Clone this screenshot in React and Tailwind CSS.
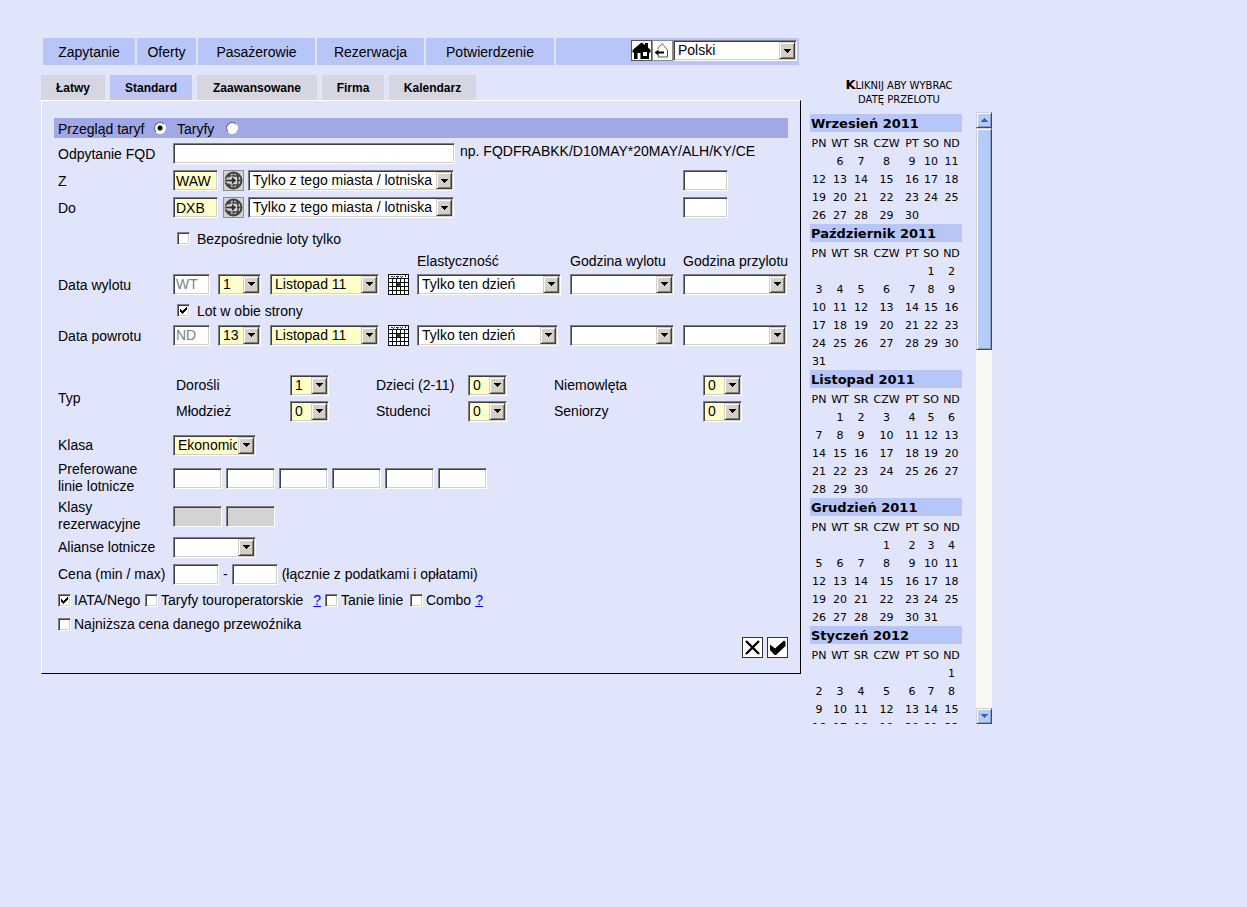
import { useRef } from "react";
import clsx from "clsx";

const SUNKEN =
  "border border-t-[#808080] border-l-[#808080] border-b-white border-r-white shadow-[inset_1px_1px_0_#404040,inset_-1px_-1px_0_#d4d0c8] rounded-none outline-none";

function Select({ label, id, options, className, yellow }) {
  return (
    <span className={clsx("relative inline-block h-[21px] shrink-0", className)}>
      <select
        id={id}
        aria-label={label}
        className={clsx(
          SUNKEN,
          "block h-full w-full appearance-none overflow-hidden pr-[18px] pl-1 text-sm leading-[19px] text-black",
          yellow ? "bg-[#ffffcc]" : "bg-white"
        )}
      >
        {options.map((o) => (
          <option key={o}>{o}</option>
        ))}
      </select>
      <span className="pointer-events-none absolute top-0.5 right-0.5 bottom-0.5 flex w-4 items-center justify-center border border-t-[#d4d0c8] border-r-[#404040] border-b-[#404040] border-l-[#d4d0c8] bg-[#d4d0c8] shadow-[inset_1px_1px_0_#ffffff,inset_-1px_-1px_0_#808080]">
        <svg width="7" height="4" viewBox="0 0 7 4" shapeRendering="crispEdges" aria-hidden="true">
          <path d="M0 0h7v1H6v1H5v1H4v1H3V3H2V2H1V1H0z" fill="#000" />
        </svg>
      </span>
    </span>
  );
}

function TextBox({ label, id, value, disabled, className, tone = "bg-white" }) {
  return (
    <input
      type="text"
      id={id}
      aria-label={label}
      defaultValue={value}
      disabled={disabled}
      className={clsx(SUNKEN, "h-[21px] shrink-0 px-0.5 text-sm leading-[19px] disabled:text-[#808080]", tone, className)}
    />
  );
}

function Check({ id, checked }) {
  return (
    <span className="relative inline-block size-[13px] shrink-0">
      <input
        type="checkbox"
        id={id}
        defaultChecked={checked}
        className={clsx(SUNKEN, "peer block size-[13px] appearance-none bg-white")}
      />
      <svg
        className="pointer-events-none absolute inset-0 hidden peer-checked:block"
        width="13"
        height="13"
        viewBox="0 0 13 13"
        shapeRendering="crispEdges"
        aria-hidden="true"
      >
        <path d="M3 5h1v1h1v1h1V6h1V5h1V4h1V3h1v3H9v1H8v1H7v1H6v1H5V9H4V8H3z" fill="#000" />
      </svg>
    </span>
  );
}

function Radio({ id, checked }) {
  return (
    <input
      type="radio"
      name="mode"
      id={id}
      defaultChecked={checked}
      className="size-3 appearance-none rounded-full border border-t-[#606060] border-r-white border-b-white border-l-[#606060] bg-white checked:bg-[radial-gradient(circle,#000_2px,#fff_3px)]"
    />
  );
}

function Globe() {
  return (
    <svg width="21" height="21" viewBox="0 0 21 21" aria-hidden="true">
      <rect x="0.5" y="0.5" width="20" height="20" fill="#d2d2d2" stroke="#8f8f8f" />
      <g fill="none" stroke="#404040" strokeWidth="1.400">
        <circle cx="10.5" cy="10.5" r="8" strokeWidth="2" />
        <path d="M10.500 2.500v4M10.500 14.500v4M4.500 6h12M4.500 15h12M14 10.500h4.500" />
        <path d="M8 3C6.500 4.500 5.800 6 5.500 7.500M5.500 13.500c.3 1.500 1 3 2.500 4.500M13 3c3 3.500 3 11.500 0 15" />
      </g>
      <path d="M2 9.200h6.500V6l5 4.500-5 4.500v-3.200H2z" fill="#303030" stroke="#d2d2d2" strokeWidth="0.8" />
    </svg>
  );
}

function GridCalendar() {
  return (
    <svg width="21" height="21" viewBox="0 0 21 21" shapeRendering="crispEdges" aria-hidden="true">
      <path fill="#fff" d="M0 0h21v21H0z" />
      <path
        fill="none"
        stroke="#111"
        d="M.5.5h20v20H.5zM1 4.500h19M1 8.500h19M1 12.500h19M1 16.500h19M4.500 5v15M8.500 5v15M12.500 5v15M16.500 5v15"
      />
      <path fill="#333" d="M3 2h2v1H3zM6 2h1v1H6zM8 2h3v1H8zM12 2h1v1h-1zM14 2h1v1h-1zM17 1h1v2h-1zM5 3h1v1H5zM9 3h1v1H9zM13 3h1v1h-1z" />
      <path fill="#111" d="M9 8h1v1h2V8h1v2h-1v1h1v2h-1v-1h-2v1H9v-2h1v-1H9z" />
      <path fill="#333" d="M9 9h4v3H9z" />
    </svg>
  );
}

function Home() {
  return (
    <svg width="21" height="21" viewBox="0 0 21 21" aria-hidden="true">
      <rect x="0.5" y="0.5" width="20" height="20" fill="#fff" stroke="#555" />
      <path
        fill="#000"
        fillRule="evenodd"
        d="M10.500 2.500L14 5V3h3v4.500L19.500 10v2.500H18V19H9.500v-6H6.500v6H3v-6.500H1.500V10zM12 12v4h4v-4z"
      />
    </svg>
  );
}

function Back() {
  return (
    <svg width="21" height="21" viewBox="0 0 21 21" aria-hidden="true">
      <rect x="0.5" y="0.5" width="20" height="20" fill="#fff" stroke="#8c8c8c" />
      <path d="M5.500 9L10 3.500l5.500 6.500" fill="none" stroke="#666" />
      <path d="M15.500 10v7h-9v-2" fill="none" stroke="#555" />
      <path d="M2.500 12.500l4-3v2h5.500v2H6.500v2z" fill="#000" />
    </svg>
  );
}

const MONTHS = [
  { name: "Wrzesień 2011", first: 1, from: 6, to: 30 },
  { name: "Październik 2011", first: 5, from: 1, to: 31 },
  { name: "Listopad 2011", first: 1, from: 1, to: 30 },
  { name: "Grudzień 2011", first: 3, from: 1, to: 31 },
  { name: "Styczeń 2012", first: 6, from: 1, to: 31 },
];
const DAYS = ["PN", "WT", "SR", "CZW", "PT", "SO", "ND"];

function weeksOf({ first, from, to }) {
  const cells = Array(first).fill(null);
  for (let d = from; d <= to; d++) cells.push(d);
  while (cells.length % 7) cells.push(null);
  const weeks = [];
  for (let i = 0; i < cells.length; i += 7) weeks.push(cells.slice(i, i + 7));
  return weeks;
}

function Month({ month }) {
  return (
    <table className="w-[152px] table-fixed border-collapse text-center text-[11px] leading-4">
      <caption className="h-[18px] bg-[#b7c5f7] pt-0.5 pl-px text-left text-[13px] leading-4 font-bold">{month.name}</caption>
      <colgroup>
        <col className="w-[18px]" />
        <col className="w-[24px]" />
        <col className="w-[18px]" />
        <col className="w-[33px]" />
        <col className="w-[18px]" />
        <col className="w-[20px]" />
        <col className="w-[21px]" />
      </colgroup>
      <thead>
        <tr className="h-5">
          {DAYS.map((d) => (
            <th key={d} className="p-0 align-bottom font-normal">{d}</th>
          ))}
        </tr>
      </thead>
      <tbody>
        {weeksOf(month).map((week, i) => (
          <tr key={i} className="h-[18px]">
            {week.map((d, j) => (
              <td key={j} className="p-0 pt-0.5">
                {d && <a href="#wylot">{d}</a>}
              </td>
            ))}
          </tr>
        ))}
      </tbody>
    </table>
  );
}

const RAISED =
  "border border-t-[#d4d0c8] border-l-[#d4d0c8] border-r-[#404a5c] border-b-[#404a5c] bg-[#b3ccfa] shadow-[inset_1px_1px_0_#ffffff,inset_-1px_-1px_0_#8aa0c8]";

function Sidebar() {
  const list = useRef(null);
  const scroll = (dy) => list.current.scrollBy({ top: dy });
  return (
    <aside className="w-[182px] shrink-0 pt-10 font-['DejaVu_Sans',sans-serif]">
      <p className="pr-1 text-center text-[10px] leading-[14px] uppercase">
        <b className="text-[13px] leading-[14px]">K</b>liknij aby wybrac
        <br />
        datę przelotu
      </p>
      <div className="mt-[5px] flex h-[612px] justify-between">
        <div ref={list} className="overflow-y-scroll pt-0.5 [scrollbar-width:none]">
          {MONTHS.map((m) => (
            <Month key={m.name} month={m} />
          ))}
        </div>
        <div className="flex w-4 flex-col bg-[#f8f8f4]">
          <button type="button" aria-label="W górę" onClick={() => scroll(-54)} className={clsx(RAISED, "flex h-4 shrink-0 items-center justify-center")}>
            <svg width="7" height="4" viewBox="0 0 7 4" shapeRendering="crispEdges" aria-hidden="true">
              <path d="M3 0h1v1h1v1h1v1h1v1H0V3h1V2h1V1h1z" fill="#46618f" />
            </svg>
          </button>
          <div className={clsx(RAISED, "h-[222px]")} />
          <button type="button" aria-label="W dół" onClick={() => scroll(54)} className={clsx(RAISED, "mt-auto flex h-4 shrink-0 items-center justify-center")}>
            <svg width="7" height="4" viewBox="0 0 7 4" shapeRendering="crispEdges" aria-hidden="true">
              <path d="M0 0h7v1H6v1H5v1H4v1H3V3H2V2H1V1H0z" fill="#46618f" />
            </svg>
          </button>
        </div>
      </div>
    </aside>
  );
}

const NAV = [
  ["Zapytanie", "w-[92px]"],
  ["Oferty", "w-[59px]"],
  ["Pasażerowie", "w-[117px]"],
  ["Rezerwacja", "w-[107px]"],
  ["Potwierdzenie", "w-[128px]"],
];
const TABS = [
  ["Łatwy", "w-[64px]"],
  ["Standard", "w-[82px]"],
  ["Zaawansowane", "w-[120px]"],
  ["Firma", "w-[62px]"],
  ["Kalendarz", "w-[87px]"],
];

function Row({ label, htmlFor, className, children }) {
  return (
    <div className={clsx("grid grid-cols-[115px_1fr] items-center", className)}>
      {htmlFor ? <label htmlFor={htmlFor}>{label}</label> : <span>{label}</span>}
      {children}
    </div>
  );
}

const DATE_GRID = "grid grid-cols-[45px_52px_118px_29px_153px_113px_1fr] items-center";

function DateRow({ id, label, className, weekday, day, flexWidth }) {
  return (
    <Row label={label} htmlFor={id} className={clsx("[&>label]:pt-0.5", className)}>
      <div className={DATE_GRID}>
        <TextBox label="Dzień tygodnia" value={weekday} disabled className="w-[37px]" />
        <Select id={id} options={[day]} className="w-[43px]" yellow />
        <Select label="Miesiąc" options={["Listopad 11", "Grudzień 11"]} className="w-[109px]" yellow />
        <button type="button" aria-label="Kalendarz" className="size-[21px]">
          <GridCalendar />
        </button>
        <Select label="Elastyczność" options={["Tylko ten dzień"]} className={flexWidth} />
        <Select label="Godzina wylotu" options={[""]} className="w-[104px]" />
        <Select label="Godzina przylotu" options={[""]} className="w-[104px]" />
      </div>
    </Row>
  );
}

function AirportRow({ id, label, code }) {
  return (
    <Row label={label} htmlFor={id} className="h-[27px] [&>label]:pt-0.5">
      <div className="grid grid-cols-[50px_25px_435px_1fr] items-center">
        <TextBox id={id} value={code} tone="bg-[#ffffcc]" className="w-[45px]" />
        <button type="button" aria-label="Wybierz lotnisko" className="size-[21px]">
          <Globe />
        </button>
        <Select label="Zakres" options={["Tylko z tego miasta / lotniska"]} className="w-[206px]" />
        <TextBox label="Kod" className="w-[45px]" />
      </div>
    </Row>
  );
}

function Passenger({ id, label, value }) {
  return (
    <>
      <label htmlFor={id}>{label}</label>
      <Select id={id} options={[value]} className="w-[39px]" yellow />
    </>
  );
}

function Option({ id, label, checked, help }) {
  return (
    <span className="flex items-center">
      <Check id={id} checked={checked} />
      <label htmlFor={id} className="pl-[3px]">{label}</label>
      {help && <a href="#pomoc" className="mr-1 ml-auto text-[#0000ff] underline">?</a>}
    </span>
  );
}

export default function App() {
  return (
    <div className="min-h-screen bg-[#e1e5fc] pt-[38px] pl-[41px] font-['Liberation_Sans',Arial,sans-serif] text-sm leading-[17px] text-black">
      <div className="flex items-start gap-[9px]">
        <main className="max-w-[760px] min-w-0 flex-1">
          <nav className="mx-0.5 flex h-[27px] gap-0.5">
            {NAV.map(([text, width]) => (
              <a key={text} href="#menu" className={clsx("flex items-center justify-center bg-[#b7c5f7] pt-0.5", width)}>
                {text}
              </a>
            ))}
            <div className="flex flex-1 items-center justify-end bg-[#b7c5f7] pr-0.5 pb-0.5">
              <button type="button" aria-label="Start"><Home /></button>
              <button type="button" aria-label="Wstecz"><Back /></button>
              <Select label="Język" options={["Polski", "English"]} className="w-[124px]" />
            </div>
          </nav>

          <div className="mt-2.5 flex h-[25px] gap-[5px] text-xs font-bold">
            {TABS.map(([text, width]) => (
              <button key={text} type="button" className={clsx(width, text === "Standard" ? "bg-[#bdc5f7]" : "bg-[#d6d6e2]")}>
                {text}
              </button>
            ))}
          </div>

          <form className="border border-t-white border-r-black border-b-black border-l-white px-3 pt-[17px] pb-[15px]" onSubmit={(e) => e.preventDefault()}>
            <div className="flex h-5 items-center bg-[#a0a8e6] pl-1">
              <label htmlFor="review" className="w-24 pt-0.5">Przegląd taryf</label>
              <Radio id="review" checked />
              <label htmlFor="fares" className="w-[60px] pt-0.5 pl-[11px]">Taryfy</label>
              <Radio id="fares" />
            </div>

            <div className="pt-0.5 pl-1">
              <Row label="Odpytanie FQD" htmlFor="fqd" className="h-[27px] [&>label]:pt-0.5">
                <div className="flex items-start gap-[5px]">
                  <TextBox id="fqd" className="w-[282px]" />
                  <span>np. FQDFRABKK/D10MAY*20MAY/ALH/KY/CE</span>
                </div>
              </Row>
              <AirportRow id="from" label="Z" code="WAW" />
              <AirportRow id="to" label="Do" code="DXB" />

              <div className="flex h-[30px] items-center gap-[7px] pt-1 pl-[119px]">
                <Check id="direct" />
                <label htmlFor="direct" className="pt-0.5">Bezpośrednie loty tylko</label>
              </div>

              <div className={clsx(DATE_GRID, "h-5 pl-[115px] whitespace-nowrap")}>
                <span className="col-start-5">Elastyczność</span>
                <span>Godzina wylotu</span>
                <span>Godzina przylotu</span>
              </div>
              <DateRow id="out" label="Data wylotu" className="h-[26px]" weekday="WT" day="1" flexWidth="w-[144px]" />
              <div className="flex h-[26px] items-center gap-[7px] pl-[119px]">
                <Check id="return" checked />
                <label htmlFor="return" className="pt-0.5">Lot w obie strony</label>
              </div>
              <DateRow id="back" label="Data powrotu" className="h-6" weekday="ND" day="13" flexWidth="w-[141px]" />

              <Row label="Typ" className="mt-[25px] h-[52px]">
                <div className="grid grid-cols-[114px_86px_92px_86px_149px_1fr] grid-rows-[26px_26px] items-center pl-[3px]">
                  <Passenger id="adults" label="Dorośli" value="1" />
                  <Passenger id="children" label="Dzieci (2-11)" value="0" />
                  <Passenger id="infants" label="Niemowlęta" value="0" />
                  <Passenger id="youth" label="Młodzież" value="0" />
                  <Passenger id="students" label="Studenci" value="0" />
                  <Passenger id="seniors" label="Seniorzy" value="0" />
                </div>
              </Row>

              <Row label="Klasa" htmlFor="cabin" className="mt-2 h-[26px]">
                <Select id="cabin" options={["Ekonomiczna"]} className="w-[83px]" yellow />
              </Row>
              <Row label={<>Preferowane<br />linie lotnicze</>} className="h-10">
                <div className="flex gap-1">
                  {[1, 2, 3, 4, 5, 6].map((n) => (
                    <TextBox key={n} label={`Linia ${n}`} className="w-[49px]" />
                  ))}
                </div>
              </Row>
              <Row label={<>Klasy<br />rezerwacyjne</>} className="h-9">
                <div className="flex gap-1">
                  <TextBox label="Klasa 1" disabled tone="bg-[#d3d3d3]" className="w-[49px]" />
                  <TextBox label="Klasa 2" disabled tone="bg-[#d3d3d3]" className="w-[49px]" />
                </div>
              </Row>
              <Row label="Alianse lotnicze" htmlFor="alliance" className="h-[26px]">
                <Select id="alliance" options={[""]} className="w-[83px]" />
              </Row>
              <Row label="Cena (min / max)" htmlFor="min" className="h-7">
                <div className="flex items-center gap-1">
                  <TextBox id="min" className="w-[46px]" />
                  <span>-</span>
                  <TextBox label="Cena max" className="w-[46px]" />
                  <span>(łącznie z podatkami i opłatami)</span>
                </div>
              </Row>

              <div className="grid h-6 grid-cols-[87px_180px_85px_77px] items-center">
                <Option id="iata" label="IATA/Nego" checked />
                <Option id="tour" label="Taryfy touroperatorskie" help />
                <Option id="low" label="Tanie linie" />
                <Option id="combo" label="Combo" help />
              </div>
              <div className="flex h-6 items-center">
                <Option id="cheapest" label="Najniższa cena danego przewoźnika" />
              </div>
            </div>

            <div className="mt-px flex justify-end gap-1">
              <button type="reset" aria-label="Wyczyść">
                <svg width="21" height="21" viewBox="0 0 21 21" aria-hidden="true">
                  <rect x="0.5" y="0.5" width="20" height="20" fill="#fff" stroke="#333" />
                  <path d="M4 4l13 13M17 4L4 17" stroke="#000" strokeWidth="2.400" />
                </svg>
              </button>
              <button type="submit" aria-label="Zatwierdź">
                <svg width="21" height="21" viewBox="0 0 21 21" aria-hidden="true">
                  <rect x="0.5" y="0.5" width="20" height="20" fill="#fff" stroke="#333" />
                  <path d="M3 7.500l5 4 9-8 1.500 1v4.500L9 18H7.500L3 13z" fill="#000" />
                </svg>
              </button>
            </div>
          </form>
        </main>
        <Sidebar />
      </div>
    </div>
  );
}
